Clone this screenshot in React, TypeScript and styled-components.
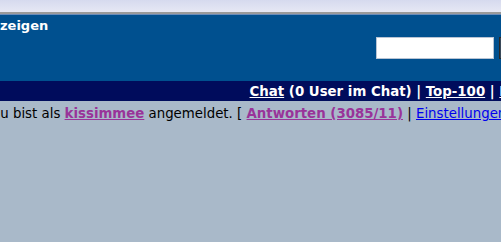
import * as React from "react";
import styled, { createGlobalStyle } from "styled-components";

const Global = createGlobalStyle`
  html, body {
    margin: 0;
    padding: 0;
    background: #a9b9c9;
    overflow: hidden;
    font-family: "DejaVu Sans", Verdana, sans-serif;
  }
`;

const Page = styled.div`
  width: 501px;
  height: 242px;
  overflow: hidden;
`;

const TopStrip = styled.div`
  height: 12px;
  background: linear-gradient(#d6daee, #e6e8f4);
  border-bottom: 2px solid #9a9a9a;
`;

const Header = styled.div`
  height: 66px;
  background: #00508f;
  border-top: 1px solid #6a8cba;
  display: flex;
  justify-content: space-between;
  align-items: flex-start;
`;

const Title = styled.div`
  color: #ffffff;
  font-weight: bold;
  font-size: 13px;
  padding: 3px 0 0 0;
`;

const SearchArea = styled.div`
  display: flex;
  gap: 5px;
  padding-top: 22px;
  margin-right: -38px;
`;

const SearchInput = styled.input`
  width: 116px;
  height: 20px;
  padding: 0;
  border: 1px solid #b8c4d4;
  background: #ffffff;
  box-sizing: content-box;
`;

const SearchButton = styled.button`
  width: 40px;
  height: 22px;
  background: #3a4a5a;
  border: 1px solid #2a2a2a;
`;

const NavBar = styled.div`
  height: 20px;
  background: #000c5c;
  display: flex;
  align-items: center;
  justify-content: flex-end;
  white-space: nowrap;
  color: #ffffff;
  font-weight: bold;
  font-size: 10pt;
  margin-right: -46px;
`;

const NavLink = styled.a`
  color: #ffffff;
  text-decoration: underline;
`;

const InfoLine = styled.div`
  padding-top: 5px;
  font-size: 10pt;
  color: #000000;
  white-space: nowrap;
  text-indent: -10px;
`;

const UserLink = styled.a<{ $bold?: boolean; $color?: string }>`
  color: ${p => p.$color || "#993399"};
  font-weight: ${p => (p.$bold ? "bold" : "normal")};
  text-decoration: underline;
`;

export default function App() {
  return (
    <Page>
      <Global />
      <TopStrip />
      <Header>
        <Title>zeigen</Title>
        <SearchArea>
          <SearchInput type="text" />
          <SearchButton />
        </SearchArea>
      </Header>
      <NavBar>
        <NavLink href="#">Chat</NavLink>&nbsp;(0 User im Chat) |&nbsp;
        <NavLink href="#">Top-100</NavLink>&nbsp;|&nbsp;
        <NavLink href="#">Forum</NavLink>
      </NavBar>
      <InfoLine>
        Du bist als <UserLink href="#" $bold>kissimmee</UserLink> angemeldet. [{" "}
        <UserLink href="#" $bold>Antworten (3085/11)</UserLink> |{" "}
        <UserLink href="#" $color="#0000ee">Einstellungen</UserLink> ]
      </InfoLine>
    </Page>
  );
}
